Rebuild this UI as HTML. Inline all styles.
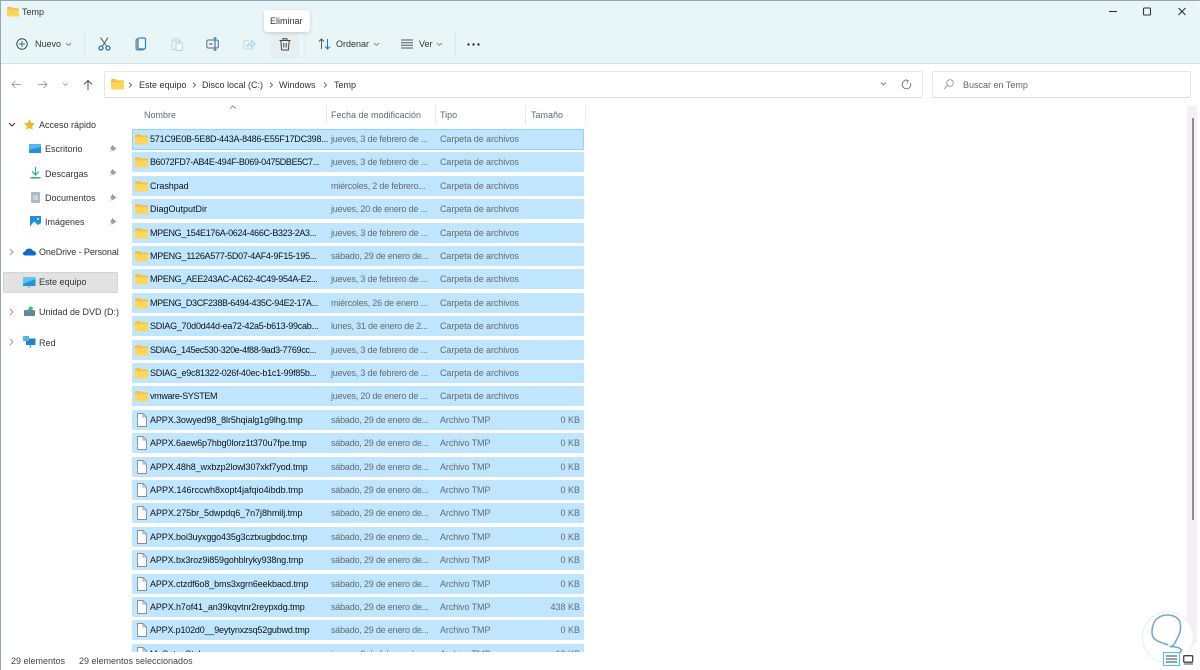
<!DOCTYPE html>
<html lang="es"><head><meta charset="utf-8"><title>Temp</title>
<style>
html,body{margin:0;padding:0;width:1200px;height:670px;overflow:hidden;background:#fff}
body{font-family:"Liberation Sans",sans-serif;font-size:9px;color:#222;position:relative}
#win{position:absolute;left:0;top:0;width:1200px;height:670px;overflow:hidden;background:#fff;filter:blur(.3px)}
.t{position:absolute;white-space:nowrap;line-height:12px}
svg{position:absolute;overflow:visible}
#bar{position:absolute;left:0;top:0;width:1200px;height:63px;background:#e9f6f7;border-bottom:1px solid #cfe0e4;border-top-right-radius:5px}
#lb{position:absolute;left:0;top:0;width:1px;height:670px;background:#93a7b8}
#tb{position:absolute;left:0;top:0;width:1200px;height:1px;background:#93a7b8}
.sep{position:absolute;top:31px;width:1px;height:25px;background:#dde8ea}
.box{position:absolute;background:#fff;border:1px solid #e6e6e6;border-bottom-color:#dcdcdc;box-sizing:border-box;border-radius:2px}
.h{position:absolute;top:105px;width:1px;height:20px;background:#e8e8ea}
#list{position:absolute;left:132px;top:129px;width:452px;height:523px;overflow:hidden}
.r{position:absolute;left:0;width:452px;height:20px;background:#bfe6fe;border-radius:1px}
.r b{position:absolute;font-weight:normal;white-space:nowrap;top:4px;line-height:12px}
.n{left:18px;color:#111;letter-spacing:-.1px}
.d{left:199px;color:#666b70;letter-spacing:-.2px}
.k{left:308px;color:#666b70;letter-spacing:-.09px}
.s{right:4px;color:#666b70}
.r svg{left:3px;top:4px}
.r svg.f{left:4px;top:3px}
</style></head><body>
<svg width="0" height="0" style="position:absolute"><defs>
<symbol id="fo" viewBox="0 0 13 12"><path d="M0 2.200Q0 1 1.200 1H4.800L6.200 2.400H11.800Q13 2.400 13 3.600V10.300Q13 11.500 11.800 11.500H1.200Q0 11.500 0 10.300Z" fill="#f8c23c"/><path d="M0 4.300H13V10.300Q13 11.500 11.800 11.500H1.200Q0 11.500 0 10.300Z" fill="#ffd65c"/></symbol>
<symbol id="fi" viewBox="0 0 11 14"><path d="M1.500 .5H7L10.500 4V13.500H1.500Z" fill="#fff" stroke="#8a8f94" stroke-width=".9"/><path d="M7 .5V4H10.500" fill="none" stroke="#8a8f94" stroke-width=".8"/></symbol>
</defs></svg>
<div id="win">
<div id="bar"></div><div id="tb"></div><div id="lb"></div>

<svg style="left:7px;top:6px" width="12" height="11"><use href="#fo" width="12" height="11"/></svg>
<div class="t" style="left:22px;top:6px;color:#333">Temp</div>

<svg style="left:1110px;top:5px" width="85" height="14" fill="none" stroke="#333" stroke-width="1">
<path d="M-1 6.500H7" stroke-width="1.100"/><rect x="33.500" y="3" width="7" height="7" rx="1" stroke-width="1.100"/><path d="M68.500 3L75.500 10M75.500 3L68.500 10" stroke-width="1.100"/></svg>

<!-- toolbar -->
<svg style="left:16px;top:38px" width="12" height="12" fill="none" stroke="#444" stroke-width="1"><circle cx="6" cy="6" r="5.200"/><path d="M6 3V9M3 6H9" stroke="#1570c0"/></svg>
<div class="t" style="left:35px;top:38px;color:#333">Nuevo</div>
<svg style="left:65px;top:42px" width="7" height="5" fill="none" stroke="#888" stroke-width=".9"><path d="M1 1L3.500 3.500L6 1"/></svg>
<div class="sep" style="left:84px"></div>

<svg style="left:98px;top:37px" width="13" height="14" fill="none" stroke="#555" stroke-width="1"><path d="M2.500 .5L8.500 9M10 .5L4.500 9"/><circle cx="3" cy="11" r="2" stroke="#1a78c8" stroke-width="1.300"/><circle cx="10" cy="11" r="2" stroke="#1a78c8" stroke-width="1.300"/></svg>
<svg style="left:135px;top:37px" width="12" height="14" fill="none"><rect x="1" y="2" width="8" height="11" rx="1.500" fill="#bbb" stroke="#777"/><rect x="3" y="1" width="7.500" height="11" rx="1.500" fill="#f2fbff" stroke="#1a86d8" stroke-width="1.200"/></svg>
<svg style="left:171px;top:38px" width="12" height="13" fill="none" stroke="#c9d2d6"><path d="M2.500 2H.8V11.500H5"/><rect x="3" y=".6" width="5" height="2.600" fill="#e9f6f7"/><path d="M8 2H9.200V5"/><rect x="5" y="5" width="6.300" height="7.500" rx="1" stroke="#a5d5f0" fill="#f4fbfd"/></svg>
<svg style="left:206px;top:37px" width="14" height="14" fill="none"><rect x=".8" y="3" width="11.500" height="8" rx="1.500" fill="#eef3f4" stroke="#666"/><path d="M3 7H6.500" stroke="#1a78c8" stroke-width="1.200"/><path d="M9 1V13M7.500 1H10.500M7.500 13H10.500" stroke="#1a86d8" stroke-width="1.200"/></svg>
<svg style="left:243px;top:38px" width="13" height="12" fill="none"><path d="M6 2.500H1V11H10V7.500" stroke="#cdd6da"/><path d="M4 8.500C4.500 6 6.500 4.800 8.500 4.800V2.500L12.300 5.800L8.500 9V6.800C6.800 6.800 5.200 7.300 4 8.500Z" stroke="#a9d4ee" fill="#dff0fa"/></svg>

<div style="position:absolute;left:271px;top:33px;width:28px;height:25px;background:#e6eeef;border-radius:2px"></div>
<svg style="left:279px;top:38px" width="12" height="13" fill="none" stroke="#444" stroke-width="1"><path d="M.5 2.500H11.500M4 2.500V.8H8V2.500M1.800 2.500L2.600 12H9.400L10.200 2.500M4.800 5V9.500M7.200 5V9.500"/></svg>
<div style="position:absolute;left:264px;top:10px;width:46px;height:22px;background:#fff;border-radius:3px;box-shadow:0 1px 3px rgba(0,0,0,.18)"></div>
<div class="t" style="left:270px;top:15px;color:#333">Eliminar</div>

<div class="sep" style="left:305px"></div>
<svg style="left:318px;top:38px" width="13" height="12" fill="none" stroke="#555" stroke-width="1"><path d="M3.500 11V1M1 3.500L3.500 1L6 3.500"/><path d="M9.500 1V11M7 8.500L9.500 11L12 8.500" stroke="#1a78c8"/></svg>
<div class="t" style="left:336px;top:38px;color:#333">Ordenar</div>
<svg style="left:373px;top:42px" width="7" height="5" fill="none" stroke="#888" stroke-width=".9"><path d="M1 1L3.500 3.500L6 1"/></svg>
<svg style="left:401px;top:39px" width="12" height="10" fill="none" stroke="#555" stroke-width="1"><path d="M0 1H12M0 3.700H12M0 6.300H12M0 9H12"/></svg>
<div class="t" style="left:419px;top:38px;color:#333">Ver</div>
<svg style="left:436px;top:42px" width="7" height="5" fill="none" stroke="#888" stroke-width=".9"><path d="M1 1L3.500 3.500L6 1"/></svg>
<div class="sep" style="left:455px"></div>
<svg style="left:467px;top:43px" width="14" height="3" fill="#333"><circle cx="1.500" cy="1.500" r="1.200"/><circle cx="6.500" cy="1.500" r="1.200"/><circle cx="11.500" cy="1.500" r="1.200"/></svg>

<!-- nav -->
<svg style="left:11px;top:79px" width="90" height="12" fill="none" stroke="#a0a4a8" stroke-width="1"><path d="M10 5.500H1M4.500 2L1 5.500L4.500 9"/><path d="M27 5.500H36M32.500 2L36 5.500L32.500 9"/><path d="M52 4L54.500 6.500L57 4" stroke-width=".9"/><path d="M77 11V1.500M73 5.500L77 1.500L81 5.500" stroke="#555"/></svg>
<div class="box" style="left:104px;top:71px;width:819px;height:27px"></div>
<svg style="left:111px;top:78px" width="13" height="12"><use href="#fo" width="13" height="12"/></svg>
<div class="t" style="left:139px;top:79px;color:#333">Este equipo</div>
<div class="t" style="left:202px;top:79px;color:#333">Disco local (C:)</div>
<div class="t" style="left:279px;top:79px;color:#333">Windows</div>
<div class="t" style="left:334px;top:79px;color:#333">Temp</div>
<svg style="left:128px;top:81px" width="210" height="8" fill="none" stroke="#666" stroke-width=".9"><path d="M1 1.500L3.500 4L1 6.500M65 1.500L67.500 4L65 6.500M142 1.500L144.500 4L142 6.500M196 1.500L198.500 4L196 6.500"/></svg>
<svg style="left:881px;top:79px" width="32" height="12" fill="none" stroke="#777" stroke-width="1"><path d="M0 3.500L2.500 6L5 3.500" stroke-width=".9"/><path d="M27 1.500A4.300 4.300 0 1 0 29.500 4M24.500 .5L27.200 1.800L26 4.300" stroke-width=".9"/></svg>
<div class="box" style="left:932px;top:71px;width:259px;height:27px"></div>
<svg style="left:943px;top:79px" width="11" height="11" fill="none" stroke="#999" stroke-width=".9"><circle cx="7" cy="4" r="3.300"/><path d="M4.500 6.500L.8 10.200"/></svg>
<div class="t" style="left:963px;top:79px;color:#666">Buscar en Temp</div>

<!-- headers -->
<svg style="left:229px;top:105px" width="9" height="5" fill="none" stroke="#888" stroke-width=".9"><path d="M1 3.500L4 1L7 3.500"/></svg>
<div class="t" style="left:144px;top:109px;color:#5d6a75">Nombre</div>
<div class="h" style="left:326px"></div>
<div class="t" style="left:331px;top:109px;color:#5d6a75">Fecha de modificación</div>
<div class="h" style="left:435px"></div>
<div class="t" style="left:440px;top:109px;color:#5d6a75">Tipo</div>
<div class="h" style="left:525px"></div>
<div class="t" style="left:531px;top:109px;color:#5d6a75">Tamaño</div>
<div class="h" style="left:585px;background:#f3e9f3"></div>

<!-- sidebar -->
<svg style="left:8px;top:122px" width="8" height="6" fill="none" stroke="#333" stroke-width="1.100"><path d="M1 1L4 4L7 1"/></svg>
<svg style="left:24px;top:119px" width="11" height="11"><path d="M5.500 .3L7.200 3.800L11 4.300L8.200 7L8.900 10.800L5.500 9L2.100 10.800L2.800 7L0 4.300L3.800 3.800Z" fill="#f7b52c"/></svg>
<div class="t" style="left:39px;top:119px;color:#333">Acceso rápido</div>

<svg style="left:29px;top:144px" width="12" height="10"><rect width="12" height="9" fill="#1f8fd8"/><path d="M0 0H12V3L0 6Z" fill="#58b6ee"/></svg>
<div class="t" style="left:45px;top:143px;color:#333">Escritorio</div>
<svg style="left:30px;top:167px" width="11" height="12" fill="none" stroke="#1fb18a" stroke-width="1.200"><path d="M5.500 0V7.500M2 4.500L5.500 8L9 4.500"/><path d="M.5 10.800H10.500" stroke-width="1.500"/></svg>
<div class="t" style="left:45px;top:168px;color:#333">Descargas</div>
<svg style="left:31px;top:192px" width="9" height="12"><rect width="9" height="11" rx="1" fill="#a9bac8"/><rect x="2" y="3" width="5" height="5" fill="#c9d4dd"/></svg>
<div class="t" style="left:45px;top:192px;color:#333">Documentos</div>
<svg style="left:30px;top:216px" width="11" height="11"><rect width="11" height="10.500" fill="#1f8fd8"/><path d="M0 10.500L4 5.500L8 9L11 7V10.500Z" fill="#e9f6fd"/><circle cx="8" cy="3" r="1" fill="#e9f6fd"/></svg>
<div class="t" style="left:45px;top:216px;color:#333">Imágenes</div>
<svg style="left:108px;top:145px" width="9" height="80" fill="#9a9ea2"><path d="M4 0L8.500 3.500L6.500 4.500L5.500 6.500L3.800 5L1 8L3.300 4.300L2 2.800L3.500 2Z"/><path transform="translate(0,24)" d="M4 0L8.500 3.500L6.500 4.500L5.500 6.500L3.800 5L1 8L3.300 4.300L2 2.800L3.500 2Z"/><path transform="translate(0,49)" d="M4 0L8.500 3.500L6.500 4.500L5.500 6.500L3.800 5L1 8L3.300 4.300L2 2.800L3.500 2Z"/><path transform="translate(0,73)" d="M4 0L8.500 3.500L6.500 4.500L5.500 6.500L3.800 5L1 8L3.300 4.300L2 2.800L3.500 2Z"/></svg>

<svg style="left:9px;top:248px" width="6" height="100" fill="none" stroke="#999" stroke-width="1"><path d="M1 1L4 4L1 7M1 31L4 34L1 37M1 61L4 64L1 67M1 91L4 94L1 97"/></svg>
<svg style="left:23px;top:248px" width="13" height="8"><path d="M2.500 7.500Q0 7.500 0 5.500Q0 3.800 2 3.500Q3.200 .5 6.300 .5Q9 .5 10 3Q13 3.300 13 5.500Q13 7.500 11 7.500Z" fill="#0f6cbd"/></svg>
<div class="t" style="left:39px;top:246px;color:#333;letter-spacing:-.1px">OneDrive - Personal</div>

<div style="position:absolute;left:3px;top:272px;width:115px;height:21px;background:#e2e2e2;border:1px solid #d4d4d4;box-sizing:border-box;border-radius:1px"></div>
<svg style="left:23px;top:277px" width="13" height="12"><rect width="12.500" height="9" fill="#2196d8"/><path d="M0 0H12.500V2L0 7Z" fill="#62c4ee"/><rect x="4.500" y="9" width="3.500" height="2" fill="#b8c2c8"/></svg>
<div class="t" style="left:39px;top:276px;color:#333">Este equipo</div>

<svg style="left:24px;top:306px" width="12" height="11"><rect x="0" y="4" width="11" height="6" rx="1" fill="#65859f"/><path d="M6 0L9.500 2L5.500 6.500L3.500 4.500Z" fill="#2fbf71"/></svg>
<div class="t" style="left:39px;top:306px;color:#333">Unidad de DVD (D:)</div>
<svg style="left:23px;top:336px" width="13" height="13"><rect x="3" y="2.500" width="9.500" height="6.500" fill="#1c84c8"/><rect x="0" y="0" width="6" height="5" fill="#52b5e8"/><rect x="6.800" y="9" width="1" height="3" fill="#6a7a85"/></svg>
<div class="t" style="left:39px;top:337px;color:#333">Red</div>

<!-- rows -->
<div id="list">
<div class="r" style="top:0;border:1px solid #8fd4fb;box-sizing:border-box;height:21px"><svg width="13" height="12" style="left:2px;top:3px"><use href="#fo" width="13" height="12"/></svg><b class="n" style="left:17px;top:3px;letter-spacing:-.21px">571C9E0B-5E8D-443A-8486-E55F17DC398...</b><b class="d" style="left:198px;top:3px">jueves, 3 de febrero de ...</b><b class="k" style="left:307px;top:3px">Carpeta de archivos</b></div>
<div class="r" style="top:23.400px"><svg width="13" height="12"><use href="#fo" width="13" height="12"/></svg><b class="n" style="letter-spacing:-.35px">B6072FD7-AB4E-494F-B069-0475DBE5C7...</b><b class="d">jueves, 3 de febrero de ...</b><b class="k">Carpeta de archivos</b></div>
<div class="r" style="top:46.800px"><svg width="13" height="12"><use href="#fo" width="13" height="12"/></svg><b class="n" style="letter-spacing:-.05px">Crashpad</b><b class="d">miércoles, 2 de febrero...</b><b class="k">Carpeta de archivos</b></div>
<div class="r" style="top:70.200px"><svg width="13" height="12"><use href="#fo" width="13" height="12"/></svg><b class="n" style="letter-spacing:0">DiagOutputDir</b><b class="d">jueves, 20 de enero de ...</b><b class="k">Carpeta de archivos</b></div>
<div class="r" style="top:93.600px"><svg width="13" height="12"><use href="#fo" width="13" height="12"/></svg><b class="n" style="letter-spacing:-.33px">MPENG_154E176A-0624-466C-B323-2A3...</b><b class="d">jueves, 3 de febrero de ...</b><b class="k">Carpeta de archivos</b></div>
<div class="r" style="top:117px"><svg width="13" height="12"><use href="#fo" width="13" height="12"/></svg><b class="n" style="letter-spacing:-.28px">MPENG_1126A577-5D07-4AF4-9F15-195...</b><b class="d">sábado, 29 de enero de...</b><b class="k">Carpeta de archivos</b></div>
<div class="r" style="top:140.400px"><svg width="13" height="12"><use href="#fo" width="13" height="12"/></svg><b class="n" style="letter-spacing:-.33px">MPENG_AEE243AC-AC62-4C49-954A-E2...</b><b class="d">jueves, 3 de febrero de ...</b><b class="k">Carpeta de archivos</b></div>
<div class="r" style="top:163.800px"><svg width="13" height="12"><use href="#fo" width="13" height="12"/></svg><b class="n" style="letter-spacing:-.35px">MPENG_D3CF238B-6494-435C-94E2-17A...</b><b class="d">miércoles, 26 de enero ...</b><b class="k">Carpeta de archivos</b></div>
<div class="r" style="top:187.200px"><svg width="13" height="12"><use href="#fo" width="13" height="12"/></svg><b class="n" style="letter-spacing:-.23px">SDIAG_70d0d44d-ea72-42a5-b613-99cab...</b><b class="d">lunes, 31 de enero de 2...</b><b class="k">Carpeta de archivos</b></div>
<div class="r" style="top:210.600px"><svg width="13" height="12"><use href="#fo" width="13" height="12"/></svg><b class="n" style="letter-spacing:-.32px">SDIAG_145ec530-320e-4f88-9ad3-7769cc...</b><b class="d">jueves, 3 de febrero de ...</b><b class="k">Carpeta de archivos</b></div>
<div class="r" style="top:234px"><svg width="13" height="12"><use href="#fo" width="13" height="12"/></svg><b class="n" style="letter-spacing:-.25px">SDIAG_e9c81322-026f-40ec-b1c1-99f85b...</b><b class="d">jueves, 3 de febrero de ...</b><b class="k">Carpeta de archivos</b></div>
<div class="r" style="top:257.400px"><svg width="13" height="12"><use href="#fo" width="13" height="12"/></svg><b class="n" style="letter-spacing:-.33px">vmware-SYSTEM</b><b class="d">jueves, 20 de enero de ...</b><b class="k">Carpeta de archivos</b></div>
<div class="r" style="top:280.800px"><svg class="f" width="11" height="14"><use href="#fi" width="11" height="14"/></svg><b class="n">APPX.3owyed98_8lr5hqialg1g9lhg.tmp</b><b class="d">sábado, 29 de enero de...</b><b class="k">Archivo TMP</b><b class="s">0 KB</b></div>
<div class="r" style="top:304.200px"><svg class="f" width="11" height="14"><use href="#fi" width="11" height="14"/></svg><b class="n">APPX.6aew6p7hbg0lorz1t370u7fpe.tmp</b><b class="d">sábado, 29 de enero de...</b><b class="k">Archivo TMP</b><b class="s">0 KB</b></div>
<div class="r" style="top:327.600px"><svg class="f" width="11" height="14"><use href="#fi" width="11" height="14"/></svg><b class="n">APPX.48h8_wxbzp2lowl307xkf7yod.tmp</b><b class="d">sábado, 29 de enero de...</b><b class="k">Archivo TMP</b><b class="s">0 KB</b></div>
<div class="r" style="top:351px"><svg class="f" width="11" height="14"><use href="#fi" width="11" height="14"/></svg><b class="n" style="letter-spacing:0">APPX.146rccwh8xopt4jafqio4ibdb.tmp</b><b class="d">sábado, 29 de enero de...</b><b class="k">Archivo TMP</b><b class="s">0 KB</b></div>
<div class="r" style="top:374.400px"><svg class="f" width="11" height="14"><use href="#fi" width="11" height="14"/></svg><b class="n" style="letter-spacing:-.05px">APPX.275br_5dwpdq6_7n7j8hmilj.tmp</b><b class="d">sábado, 29 de enero de...</b><b class="k">Archivo TMP</b><b class="s">0 KB</b></div>
<div class="r" style="top:397.800px"><svg class="f" width="11" height="14"><use href="#fi" width="11" height="14"/></svg><b class="n">APPX.boi3uyxggo435g3cztxugbdoc.tmp</b><b class="d">sábado, 29 de enero de...</b><b class="k">Archivo TMP</b><b class="s">0 KB</b></div>
<div class="r" style="top:421.200px"><svg class="f" width="11" height="14"><use href="#fi" width="11" height="14"/></svg><b class="n">APPX.bx3roz9i859gohblryky938ng.tmp</b><b class="d">sábado, 29 de enero de...</b><b class="k">Archivo TMP</b><b class="s">0 KB</b></div>
<div class="r" style="top:444.600px"><svg class="f" width="11" height="14"><use href="#fi" width="11" height="14"/></svg><b class="n">APPX.ctzdf6o8_bms3xgrn6eekbacd.tmp</b><b class="d">sábado, 29 de enero de...</b><b class="k">Archivo TMP</b><b class="s">0 KB</b></div>
<div class="r" style="top:468px"><svg class="f" width="11" height="14"><use href="#fi" width="11" height="14"/></svg><b class="n">APPX.h7of41_an39kqvtnr2reypxdg.tmp</b><b class="d">sábado, 29 de enero de...</b><b class="k">Archivo TMP</b><b class="s">438 KB</b></div>
<div class="r" style="top:491.400px"><svg class="f" width="11" height="14"><use href="#fi" width="11" height="14"/></svg><b class="n" style="letter-spacing:-.18px">APPX.p102d0__9eytynxzsq52gubwd.tmp</b><b class="d">sábado, 29 de enero de...</b><b class="k">Archivo TMP</b><b class="s">0 KB</b></div>
<div class="r" style="top:514.800px"><svg class="f" width="11" height="14"><use href="#fi" width="11" height="14"/></svg><b class="n">MoSetupStub</b><b class="d">jueves, 3 de febrero de ...</b><b class="k">Archivo TMP</b><b class="s">12 KB</b></div>
</div>

<!-- scrollbar -->
<div style="position:absolute;left:1187px;top:106px;width:10px;height:537px;background:#f6eff7"></div>
<div style="position:absolute;left:1192px;top:118px;width:2px;height:402px;background:#8e8e94"></div>

<!-- status -->
<div class="t" style="left:11px;top:655px;color:#444">29 elementos</div>
<div class="t" style="left:79px;top:655px;color:#444">29 elementos seleccionados</div>

<!-- watermark + view buttons -->
<svg style="left:1140px;top:608px" width="60" height="62" fill="none">
<circle cx="28" cy="29.300" r="25.500" fill="#fff" fill-opacity=".92" stroke="#e4edf3"/>
<path d="M28.300 37C23 35 15 33 13 29C10.500 23 13 13 18 10C23 6 32 6 37 10C41 13 41 19 40 24C39 28 36 32 35 35.300C34 37 32 38 30 38.700C34 38.500 39 39 41.700 42C40 45 38 48 35 48.700" stroke="#6fa5d8" stroke-width="1.500"/>
</svg>
<div style="position:absolute;left:1163px;top:652px;width:17px;height:14px;box-sizing:border-box;border:1px solid #4cc2f1;background:#f2fbfe"></div>
<svg style="left:1166px;top:655px" width="12" height="9" fill="none" stroke="#444"><path d="M0 1H11M0 4H11M0 7H11"/></svg>
<svg style="left:1183px;top:655px" width="11" height="10" fill="none" stroke="#444"><rect x=".7" y=".7" width="9" height="6.500" rx="1" stroke-width="1.300"/><path d="M1 9H10"/></svg>
</div>
</body></html>
